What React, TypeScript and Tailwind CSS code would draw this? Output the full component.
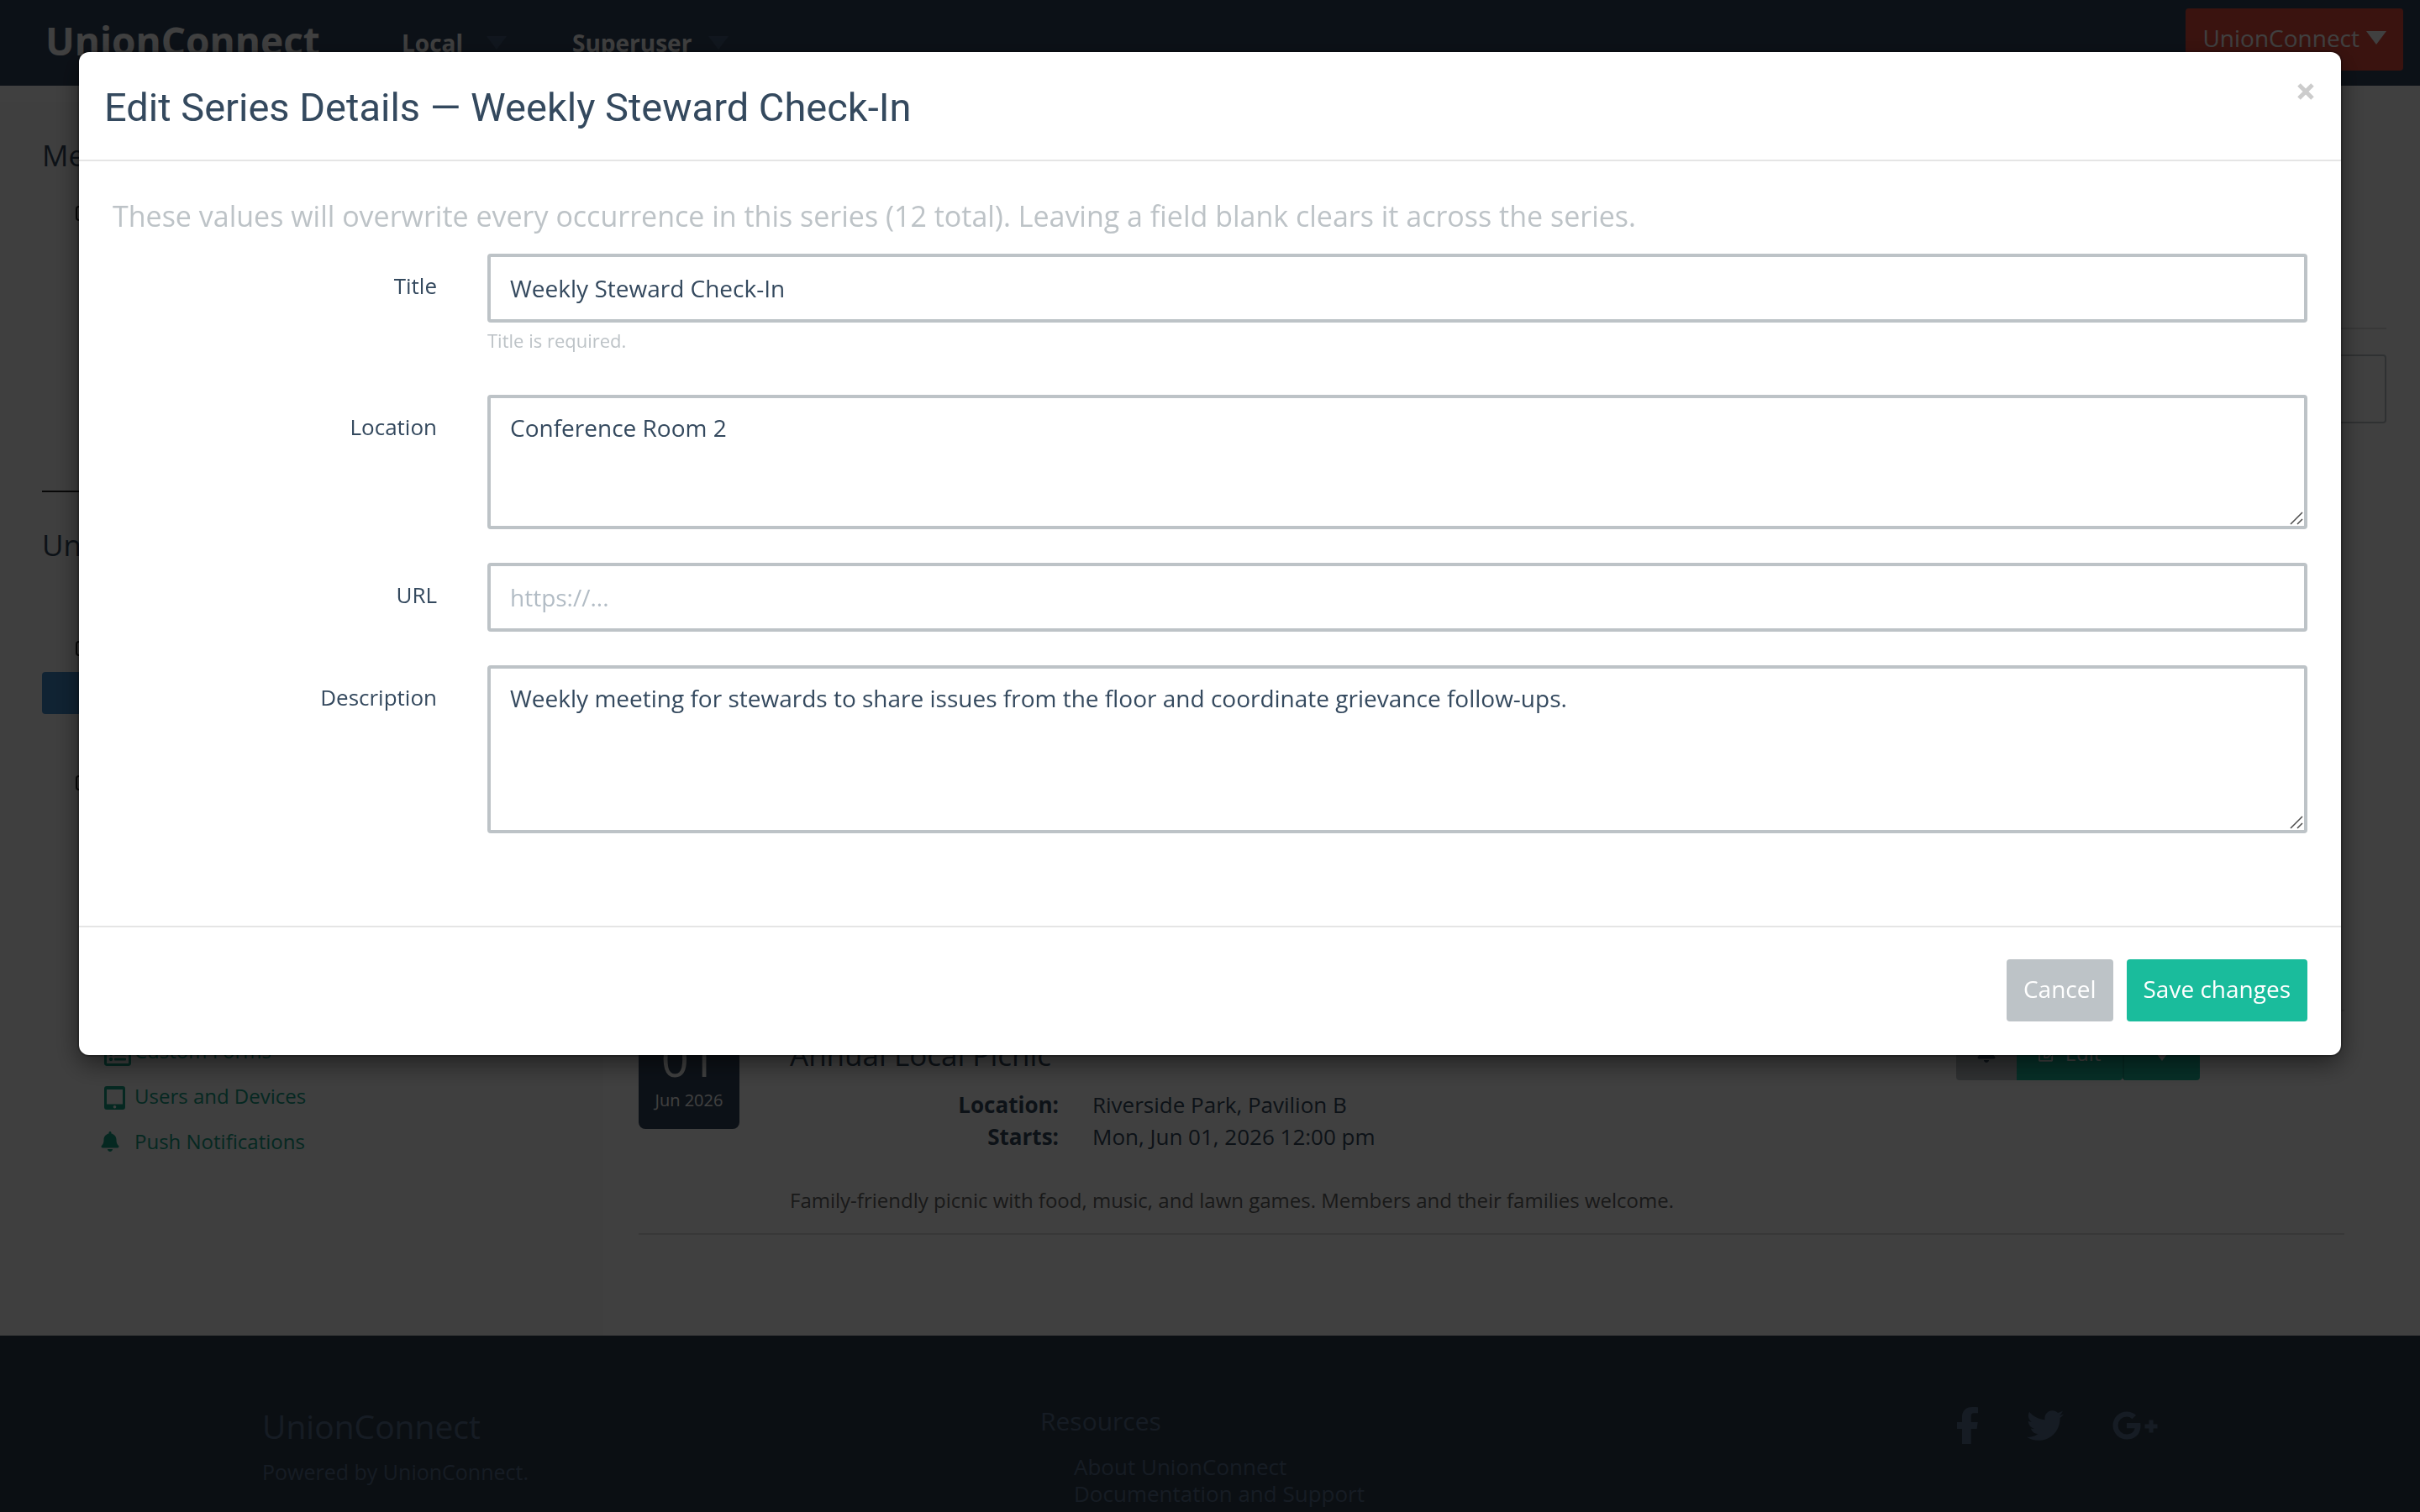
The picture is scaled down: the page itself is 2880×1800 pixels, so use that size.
import type {ReactNode} from 'react';
import {FaRegListAlt, FaBell, FaRegEdit, FaTwitter} from 'react-icons/fa';

function Caret(props: {className: string}) {
  return (
    <svg viewBox="0 0 24 16" className={props.className} fill="currentColor" aria-hidden="true">
      <path d="M0 0h24L12 16z"/>
    </svg>
  );
}

function TabletIcon() {
  return (
    <svg viewBox="0 0 25 28" className="mt-1 ml-1 w-[25px] h-7" fill="currentColor" fillRule="evenodd" aria-hidden="true">
      <path d="M3 0h19a3 3 0 0 1 3 3v22a3 3 0 0 1-3 3H3a3 3 0 0 1-3-3V3a3 3 0 0 1 3-3zM3 4v17.500h19V4zM12.500 23a1.800 1.800 0 1 0 0 3.600 1.800 1.800 0 0 0 0-3.600z"/>
    </svg>
  );
}

function FacebookIcon() {
  return (
    <svg viewBox="0 0 25 44" className="w-[25px] h-11" fill="currentColor" aria-hidden="true">
      <path d="M25 .3v7h-4.300c-3.200 0-4 1.500-4 3.800v6.800h8L23.600 26h-6.900v18H6V26H0v-8.100h6v-6C6 4.500 10.500 0 18.500 0c3 0 5.500.2 6.500.3z"/>
    </svg>
  );
}

function GooglePlusIcon() {
  return (
    <svg viewBox="0 0 54 34" className="w-[54px] h-[34px]" fill="currentColor" aria-hidden="true">
      <path d="M17 14h16.2c.2 1 .3 2 .3 3.200C33.500 27 27 33.500 17 33.500A16.500 16.500 0 0 1 17 .5c4.500 0 8.200 1.600 11 4.300l-4.600 4.400C22 7.900 20 6.500 17 6.500a10.500 10.500 0 0 0 0 21c6.600 0 9.200-4.600 9.600-7.300H17z"/>
      <path d="M43.500 10.500h5v5h5v5h-5v5h-5v-5h-5v-5h5z"/>
    </svg>
  );
}

function ResizeGrip() {
  return (
    <svg viewBox="0 0 16 16" className="absolute right-[5px] bottom-[5px] size-4 pointer-events-none" stroke="#4a4a4a" strokeWidth="1.500" aria-hidden="true">
      <path d="M1 15L15 1M9 15l6-6"/>
    </svg>
  );
}

const SIDE_LINKS = [
  {label: 'Custom Forms', icon: <FaRegListAlt className="mt-2 ml-1 size-8"/>},
  {label: 'Users and Devices', icon: <TabletIcon/>},
  {label: 'Push Notifications', icon: <FaBell className="w-[22px] h-6"/>},
];

function NavBar() {
  return (
    <header className="flex h-[102px] items-start bg-[#33465e] text-white">
      <a href="#" className="ml-[54px] w-[424px] text-[46px] font-bold leading-[96px]">UnionConnect</a>
      <nav className="flex grow text-[28px] font-bold leading-[102px]">
        <a href="#" className="flex w-[203px] items-center gap-7">
          Local <Caret className="w-6 h-4 text-[#435a78]"/>
        </a>
        <a href="#" className="flex items-center gap-5">
          Superuser <Caret className="w-6 h-4 text-[#435a78]"/>
        </a>
      </nav>
      <button className="mt-2.5 mr-5 flex h-[74px] items-center gap-2 rounded bg-[#e74c3c] px-5 pb-1 text-[28px]">
        UnionConnect <Caret className="w-6 h-4"/>
      </button>
    </header>
  );
}

function SideItem() {
  return (
    <div className="flex h-11 items-center pl-10">
      <span className="size-[18px] rounded border-2 border-[#222]"/>
    </div>
  );
}

function Sidebar() {
  return (
    <aside className="mt-5 w-[718px] shrink-0 bg-[#f9f9f9] px-[50px] pt-10">
      <h4 className="text-[35px] leading-[46px]">Members</h4>
      <div className="mt-6"><SideItem/></div>
      <hr className="mt-[308px] border-t-2 border-[#222]"/>
      <h4 className="mt-10 text-[35px] leading-[46px]">UnionConnect</h4>
      <div className="mt-[78px]"><SideItem/></div>
      <a href="#" aria-label="Calendar" className="mt-1.5 block h-[50px] rounded bg-[#428bca]"/>
      <div className="mt-[60px]"><SideItem/></div>
      <ul className="mt-[270px] pl-[70px] text-[24px] leading-[54px] text-[#16a085]">
        {SIDE_LINKS.map((link) => (
          <li key={link.label}>
            <a href="#" className="flex items-center">
              <span className="w-10">{link.icon}</span>
              {link.label}
            </a>
          </li>
        ))}
      </ul>
    </aside>
  );
}

function EventRow() {
  return (
    <article className="flex items-start pt-2">
      <div className="mt-3 w-[120px] rounded-lg bg-[#33465e] pt-2 pb-4 text-center text-white">
        <div className="text-[58px] leading-[56px]">01</div>
        <div className="mt-1 text-[20px] leading-[36px]">Jun 2026</div>
      </div>
      <div className="mt-5 ml-15 grow">
        <h4 className="text-[35px] leading-[48px]">Annual Local Picnic</h4>
        <dl className="mt-4 grid grid-cols-[320px_1fr] gap-x-10 text-[26px] leading-[38px]">
          <dt className="text-right font-bold">Location:</dt>
          <dd>Riverside Park, Pavilion B</dd>
          <dt className="text-right font-bold">Starts:</dt>
          <dd>Mon, Jun 01, 2026 12:00 pm</dd>
        </dl>
        <p className="mt-[38px] text-[24px] leading-[38px] text-[#666]">
          Family-friendly picnic with food, music, and lawn games. Members and their families welcome.
        </p>
      </div>
      <div className="mr-[172px] flex h-[74px] text-[24px] text-white">
        <button aria-label="Notify" className="flex w-[72px] items-center justify-center rounded-l bg-[#bdc3c7] pt-2 text-[#34495e]">
          <FaBell className="size-6"/>
        </button>
        <button className="flex w-[126px] items-center justify-center gap-2.5 rounded-r bg-[#1abc9c] pt-2.5">
          <FaRegEdit className="size-[22px]"/> Edit
        </button>
        <button aria-label="More" className="flex w-[92px] items-center justify-center rounded border-l-2 border-[#16a085] bg-[#1abc9c] pt-3">
          <Caret className="w-6 h-4"/>
        </button>
      </div>
    </article>
  );
}

function Footer() {
  return (
    <footer className="flex grow items-start bg-[#2c3e4c] px-[312px] pt-20 text-[#5a7090]">
      <div className="w-[926px]">
        <h4 className="text-[39px] leading-[56px]">UnionConnect</h4>
        <p className="mt-2.5 text-[25px] leading-8">Powered by UnionConnect.</p>
      </div>
      <div className="grow">
        <h5 className="text-[30px] leading-[44px]">Resources</h5>
        <ul className="mt-4 pl-10 text-[26px] leading-8">
          <li><a href="#">About UnionConnect</a></li>
          <li><a href="#">Documentation and Support</a></li>
        </ul>
      </div>
      <div className="mt-[5px] flex items-center gap-[58px]">
        <a href="#" aria-label="Facebook"><FacebookIcon/></a>
        <a href="#" aria-label="Twitter"><FaTwitter className="size-11"/></a>
        <a href="#" aria-label="Google Plus"><GooglePlusIcon/></a>
      </div>
    </footer>
  );
}

const FIELD = 'block w-full rounded border-4 border-[#bdc3c7] bg-white px-[23px] text-[28px] leading-[44px] text-[#34495e] outline-none placeholder:text-[#b2bcc5]';

function FormRow(props: {id: string; label: string; children: ReactNode}) {
  return (
    <div className="flex items-start gap-15">
      <label htmlFor={props.id} className="w-[386px] shrink-0 pt-[21px] text-right text-[26px] leading-[34px]">
        {props.label}
      </label>
      <div className="relative grow">{props.children}</div>
    </div>
  );
}

function EditSeriesModal() {
  return (
    <div className="fixed inset-0 bg-black/75 px-[94px] pt-[62px]">
      <div role="dialog" aria-labelledby="modal-title" className="rounded-xl bg-white shadow-[0_10px_30px_rgba(0,0,0,0.5)] ring-2 ring-black/20">
        <div className="flex items-start justify-between border-b-2 border-[#e5e5e5] pt-8 pr-8 pb-7 pl-[30px]">
          <h3 id="modal-title" className="font-['Roboto',sans-serif] text-[47px] leading-[68px]">
            Edit Series Details — Weekly Steward Check-In
          </h3>
          <button aria-label="Close" className="mt-[5px] text-[#ccc]">
            <svg viewBox="0 0 20 20" className="size-5" stroke="currentColor" strokeWidth="5">
              <path d="M2 2l16 16M18 2L2 18"/>
            </svg>
          </button>
        </div>
        <form className="px-10 pt-10 pb-[110px]">
          <p className="text-[34px] leading-[50px] text-[#bdc3c7]">
            These values will overwrite every occurrence in this series (12 total). Leaving a field blank clears it across the series.
          </p>
          <div className="mt-5 flex flex-col gap-10">
            <FormRow id="title" label="Title">
              <input id="title" type="text" defaultValue="Weekly Steward Check-In" className={`${FIELD} h-[82px]`}/>
              <p className="pb-1 text-[22px] leading-[42px] text-[#bdc3c7]">Title is required.</p>
            </FormRow>
            <FormRow id="location" label="Location">
              <textarea id="location" defaultValue="Conference Room 2" className={`${FIELD} h-40 resize-none py-[13px]`}/>
              <ResizeGrip/>
            </FormRow>
            <FormRow id="url" label="URL">
              <input id="url" type="text" placeholder="https://..." className={`${FIELD} h-[82px]`}/>
            </FormRow>
            <FormRow id="description" label="Description">
              <textarea
                id="description"
                defaultValue="Weekly meeting for stewards to share issues from the floor and coordinate grievance follow-ups."
                className={`${FIELD} h-[200px] resize-none py-[13px]`}
              />
              <ResizeGrip/>
            </FormRow>
          </div>
        </form>
        <div className="flex justify-end gap-4 border-t-2 border-[#e5e5e5] px-10 pt-[38px] pb-10 text-[28px] text-white">
          <button className="h-[74px] rounded bg-[#bdc3c7] px-5 pb-1">Cancel</button>
          <button className="h-[74px] rounded bg-[#1abc9c] px-5 pb-1">Save changes</button>
        </div>
      </div>
    </div>
  );
}

export default function App() {
  return (
    <div className="flex h-screen flex-col overflow-hidden bg-white font-['Open_Sans',sans-serif] text-[#34495e]">
      <NavBar/>
      <div className="flex shrink-0">
        <Sidebar/>
        <main className="grow pr-10 pb-[120px] pl-[42px] pt-[288px]">
          <hr className="border-t-2 border-[#ddd]"/>
          <input type="search" aria-label="Search events" className="mt-[30px] block h-[82px] w-full rounded border-2 border-[#bdc3c7]"/>
          <div className="mt-[698px] mr-[50px]">
            <hr className="border-t-2 border-[#ddd]"/>
            <EventRow/>
            <hr className="mt-5 border-t-2 border-[#ddd]"/>
          </div>
        </main>
      </div>
      <Footer/>
      <EditSeriesModal/>
    </div>
  );
}
